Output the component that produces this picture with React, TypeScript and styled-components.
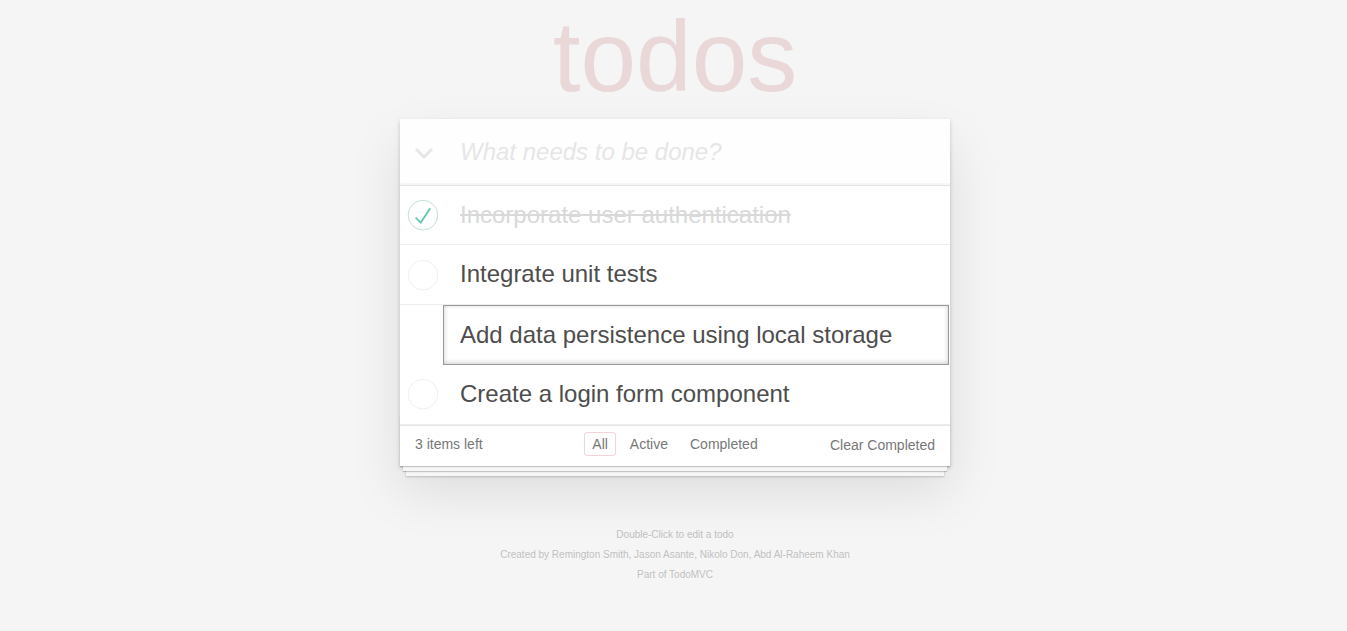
import styled, { createGlobalStyle } from "styled-components";

const GlobalStyle = createGlobalStyle`
    html, body {
        margin: 0;
        padding: 0;
    }
    body {
        font: 14px "Liberation Sans", Arial, Helvetica, sans-serif;
        line-height: 1.4em;
        background: #f5f5f5;
        color: #4d4d4d;
        font-weight: 300;
    }
`;

const Page = styled.div`
    padding: 6px 0 0 3px;
`;

const Column = styled.div`
    width: 550px;
    margin: 0 auto;
`;

const Title = styled.h1`
    margin: 0 0 13px;
    font-size: 100px;
    line-height: 100px;
    font-weight: 100;
    text-align: center;
    color: rgba(175, 47, 47, 0.15);
`;

const Card = styled.section`
    position: relative;
    background: #fff;
    margin: 0 0 40px;
    box-shadow: 0 2px 4px 0 rgba(0, 0, 0, 0.2), 0 25px 50px 0 rgba(0, 0, 0, 0.1);
`;

const Header = styled.header`
    display: flex;
    align-items: center;
    background: rgba(0, 0, 0, 0.003);
    box-shadow: inset 0 -2px 1px rgba(0, 0, 0, 0.03);
`;

const ToggleAll = styled.span`
    width: 60px;
    flex: none;
    box-sizing: border-box;
    display: flex;
    padding: 2px 0 0 14px;
`;

const NewTodo = styled.input`
    flex: 1;
    min-width: 0;
    margin: 0;
    border: none;
    background: transparent;
    padding: 16px 16px 16px 0;
    font-family: inherit;
    font-size: 24px;
    line-height: 1.4em;
    color: inherit;
    outline: none;
    &::placeholder {
        font-style: italic;
        color: #e6e6e6;
    }
`;

const List = styled.ul`
    margin: 0;
    padding: 0;
    list-style: none;
    border-top: 1px solid #e6e6e6;
`;

const Item = styled.li<{ $editing?: boolean }>`
    display: flex;
    align-items: center;
    font-size: 24px;
    border-bottom: ${(p) => (p.$editing ? "none" : "1px solid #ededed")};
`;

const Toggle = styled.span`
    width: 40px;
    height: 40px;
    flex: none;
`;

const Label = styled.label<{ $done?: boolean }>`
    display: block;
    flex: 1;
    padding: 15px 15px 15px 20px;
    line-height: 1.2;
    word-break: break-all;
    color: ${(p) => (p.$done ? "#d9d9d9" : "#4d4d4d")};
    text-decoration: ${(p) => (p.$done ? "line-through" : "none")};
`;

const Edit = styled.input`
    display: block;
    box-sizing: border-box;
    width: 506px;
    margin: 0 0 0 43px;
    padding: 12px 16px;
    font-family: inherit;
    font-size: 24px;
    line-height: 1.4em;
    color: inherit;
    border: 1px solid #999;
    box-shadow: inset 0 -1px 5px 0 rgba(0, 0, 0, 0.2);
    outline: none;
    background: #fff;
`;

const Footer = styled.footer`
    position: relative;
    display: grid;
    grid-template-columns: 1fr auto 1fr;
    grid-template-rows: 20px;
    align-items: center;
    padding: 10px 15px;
    color: #777;
    border-top: 1px solid #e6e6e6;
    &::before {
        content: "";
        position: absolute;
        left: 0;
        right: 0;
        bottom: 0;
        height: 50px;
        overflow: hidden;
        box-shadow: 0 1px 1px rgba(0, 0, 0, 0.2), 0 8px 0 -3px #f6f6f6,
            0 9px 1px -3px rgba(0, 0, 0, 0.2), 0 16px 0 -6px #f6f6f6,
            0 17px 2px -6px rgba(0, 0, 0, 0.2);
    }
`;

const Count = styled.span`
    justify-self: start;
    position: relative;
    top: -1.5px;
    line-height: 20px;
`;

const Filters = styled.ul`
    display: flex;
    margin: 0;
    padding: 0;
    list-style: none;
    position: relative;
    top: -1.5px;
`;

const FilterLink = styled.a<{ $selected?: boolean }>`
    display: block;
    margin: 0 3px;
    padding: 3px 7px;
    line-height: 16px;
    color: inherit;
    text-decoration: none;
    border: 1px solid ${(p) => (p.$selected ? "rgba(175, 47, 47, 0.2)" : "transparent")};
    border-radius: 3px;
`;

const ClearCompleted = styled.button`
    justify-self: end;
    position: relative;
    top: -0.5px;
    margin: 0;
    padding: 0;
    border: none;
    background: none;
    font: inherit;
    color: inherit;
    line-height: 20px;
    cursor: pointer;
`;

const Info = styled.footer`
    margin-top: 64.5px;
    display: flex;
    flex-direction: column;
    gap: 10px;
    color: #bfbfbf;
    font-size: 10px;
    text-shadow: 0 1px 0 rgba(255, 255, 255, 0.5);
    text-align: center;
    p {
        margin: 0;
        line-height: 1;
    }
`;

function Circle({ done }: { done: boolean }) {
    return (
        <svg width="40" height="40" viewBox="-10 -18 100 135">
            <circle cx="50" cy="50" r="50" fill="none" stroke={done ? "#bddad5" : "#ededed"} strokeWidth="3" />
            {done && <path fill="#5dc2af" d="M72 25L42 71 27 56l-4 4 20 20 34-52z" />}
        </svg>
    );
}

const todos = [
    { text: "Incorporate user authentication", done: true },
    { text: "Integrate unit tests", done: false },
    { text: "Add data persistence using local storage", done: false, editing: true },
    { text: "Create a login form component", done: false },
];

export default function App() {
    return (
        <Page>
            <GlobalStyle />
            <Column>
                <Title>todos</Title>
                <Card>
                    <Header>
                        <ToggleAll>
                            <svg width="20" height="12" viewBox="0 0 20 12">
                                <polyline points="2,2 10,10 18,2" fill="none" stroke="#e6e6e6" strokeWidth="3" />
                            </svg>
                        </ToggleAll>
                        <NewTodo placeholder="What needs to be done?" />
                    </Header>
                    <List>
                        {todos.map((t) =>
                            t.editing ? (
                                <Item key={t.text} $editing>
                                    <Edit defaultValue={t.text} />
                                </Item>
                            ) : (
                                <Item key={t.text}>
                                    <Toggle>
                                        <Circle done={t.done} />
                                    </Toggle>
                                    <Label $done={t.done}>{t.text}</Label>
                                </Item>
                            )
                        )}
                    </List>
                    <Footer>
                        <Count>3 items left</Count>
                        <Filters>
                            <li><FilterLink href="#/" $selected>All</FilterLink></li>
                            <li><FilterLink href="#/active">Active</FilterLink></li>
                            <li><FilterLink href="#/completed">Completed</FilterLink></li>
                        </Filters>
                        <ClearCompleted>Clear Completed</ClearCompleted>
                    </Footer>
                </Card>
                <Info>
                    <p>Double-Click to edit a todo</p>
                    <p>Created by Remington Smith, Jason Asante, Nikolo Don, Abd Al-Raheem Khan</p>
                    <p>Part of TodoMVC</p>
                </Info>
            </Column>
        </Page>
    );
}
